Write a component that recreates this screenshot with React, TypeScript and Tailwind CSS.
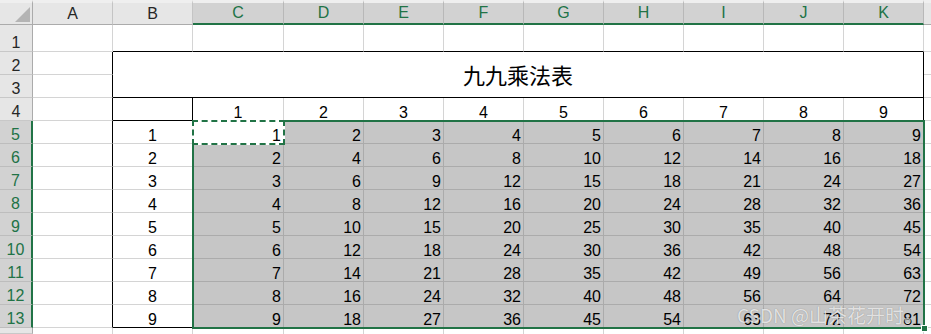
const COLS = ['A', 'B', 'C', 'D', 'E', 'F', 'G', 'H', 'I', 'J', 'K'];
const ROWS = Array.from({ length: 14 }, (_, i) => i + 1);

function headerCellClass(ci: number) {
  if (ci >= 2) {
    return 'bg-[#d2d2d2] text-[#217346] border-r border-r-[#b8b8b8] border-b-2 border-b-[#217346]';
  }
  return 'bg-[#e6e6e6] text-[#262626] border-r border-r-[#c4c4c4] border-b border-b-[#ababab]';
}

function rowHeaderClass(r: number) {
  if (r >= 5 && r <= 13) {
    return 'bg-[#d2d2d2] text-[#217346] border-r-2 border-r-[#217346] border-b border-b-[#bdbdbd]';
  }
  return 'bg-[#e6e6e6] text-[#262626] border-r border-r-[#ababab] border-b border-b-[#c8c8c8]';
}

function dataCell(r: number, ci: number): { cls: string; text: string } {
  const base = 'flex items-end leading-[15px] border-r border-b';
  if (r === 14) {
    return { cls: 'border-r border-r-[#d4d4d4] bg-white', text: '' };
  }
  if (ci === 0) {
    if (r === 1) return { cls: `${base} bg-white border-[#d4d4d4]`, text: '' };
    return { cls: `${base} bg-white border-b-[#d4d4d4] border-r-black`, text: '' };
  }
  if (r === 1) {
    return { cls: `${base} bg-white border-r-[#d4d4d4] border-b-black`, text: '' };
  }
  if (r === 4) {
    if (ci === 1) return { cls: `${base} bg-white border-black`, text: '' };
    if (ci === 10) return { cls: `${base} justify-center bg-white border-black`, text: '9' };
    return { cls: `${base} justify-center bg-white border-r-[#d4d4d4] border-b-black`, text: String(ci - 1) };
  }
  // rows 5..13
  const n = r - 4;
  if (ci === 1) {
    return {
      cls: r === 13 ? `${base} justify-center bg-white border-black` : `${base} justify-center bg-white border-r-black border-b-[#d4d4d4]`,
      text: String(n),
    };
  }
  const value = String(n * (ci - 1));
  const fill = r === 5 && ci === 2 ? 'bg-white' : 'bg-[#c6c6c6]';
  const right = ci === 10 ? 'border-r-black' : 'border-r-[#ababab]';
  const bottom = r === 13 ? 'border-b-black' : 'border-b-[#ababab]';
  return { cls: `${base} justify-end pr-[2px] ${fill} ${right} ${bottom}`, text: value };
}

export default function App() {
  return (
    <div className="relative w-[931px] h-[334px] overflow-hidden bg-white font-['Liberation_Sans',sans-serif] text-[16px] text-black">
      <div className="grid w-full h-full grid-cols-[33px_80px_80px_91px_repeat(8,80px)_1fr] grid-rows-[25px_27px_repeat(12,23px)_1fr]">
        {/* column headers */}
        <div className="relative bg-[#e6e6e6] border-t-[3px] border-t-[#efefef] border-r border-r-[#ababab] border-b border-b-[#ababab]">
          <div className="absolute left-[15px] top-[4px] w-0 h-0 border-l-[15px] border-l-transparent border-b-[15px] border-b-[#b4b4b4]" />
        </div>
        {COLS.map((c, ci) => (
          <div
            key={c}
            className={`flex items-end justify-center pb-[1px] leading-[18px] border-t-[3px] border-t-[#efefef] ${headerCellClass(ci)}`}
          >
            {c}
          </div>
        ))}
        <div className="bg-[#e6e6e6] border-t-[3px] border-t-[#efefef] border-b border-b-[#ababab]" />

        {ROWS.map((r) => (
          <RowCells key={r} r={r} />
        ))}
      </div>

      {/* selection range C5:K13 */}
      <div className="pointer-events-none absolute left-[192px] top-[120px] w-[733px] h-[209px] border-2 border-[#217346]" />
      {/* copy marquee on C5 */}
      <div className="pointer-events-none absolute left-[192px] top-[120px] w-[93px] h-[25px] border-2 border-white">
        <div className="absolute -inset-[2px] border-2 border-dashed border-[#217346]" />
      </div>
      {/* fill handle */}
      <div className="pointer-events-none absolute left-[921px] top-[325px] w-[7px] h-[7px] bg-[#217346] border border-white" />

      {/* watermark */}
      <div className="pointer-events-none absolute left-[737px] top-[302px] text-[19px] leading-[26px] font-['Noto_Sans_CJK_SC',sans-serif] text-white/75 [text-shadow:0_0_1px_rgba(0,0,0,0.35)]">
        CSDN @山茶花开时。
      </div>
    </div>
  );
}

function RowCells({ r }: { r: number }) {
  return (
    <>
      <div className={`flex items-end justify-center leading-[15px] pb-[1px] ${rowHeaderClass(r)}`}>
        {r === 14 ? '' : r}
      </div>
      {COLS.map((c, ci) => {
        if ((r === 2 || r === 3) && ci >= 1) {
          if (r === 2 && ci === 1) {
            return (
              <div
                key={c}
                className="col-span-10 row-span-2 flex items-center justify-center bg-white border-r border-b border-black font-['Noto_Sans_CJK_SC',sans-serif] text-[22px]"
              >
                九九乘法表
              </div>
            );
          }
          return null;
        }
        const cell = dataCell(r, ci);
        return (
          <div key={c} className={cell.cls}>
            {cell.text}
          </div>
        );
      })}
      <div className={r === 14 ? 'bg-white' : 'bg-white border-b border-b-[#d4d4d4]'} />
    </>
  );
}
